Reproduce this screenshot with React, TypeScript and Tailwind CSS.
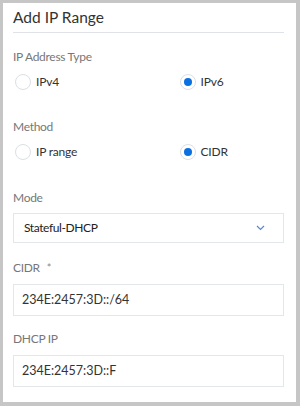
const font = { fontFamily: 'Lato, "Noto Sans", sans-serif' };

const Radio = ({ label, checked }: { label: string; checked?: boolean }) => (
  <div className="flex items-center h-[20px]">
    <span className="w-[16px] h-[16px] ml-[2px] rounded-full border border-[#dcdfe3] bg-white flex items-center justify-center">
      {checked && <span className="w-[8px] h-[8px] rounded-full bg-[#0a6fe0]" />}
    </span>
    <span className="text-[12px] tracking-[-0.2px] text-[#333] ml-[5px]">{label}</span>
  </div>
);

const Label = ({ children }: { children: React.ReactNode }) => (
  <div className="h-[18px] flex items-center text-[12px] tracking-[-0.3px] text-[#777]">
    {children}
  </div>
);

const RadioGroup = ({ a, b }: { a: string; b: string }) => (
  <div className="grid grid-cols-2 mt-[6px]">
    <Radio label={a} />
    <div className="pl-[29px]">
      <Radio label={b} checked />
    </div>
  </div>
);

export default function App() {
  return (
    <div
      className="w-[300px] h-[406px] bg-[#c6c6c6] pt-[3px] pl-[3px] pr-[4px] pb-[4px]"
      style={font}
    >
      <div className="h-full bg-white pl-[10px] pr-[12px]">
        <div className="h-[30px] flex items-center border-b border-[#dfe3e8] text-[15.5px] text-[#333]">
          Add IP Range
        </div>

        <div className="mt-[15px]">
          <Label>IP Address Type</Label>
          <RadioGroup a="IPv4" b="IPv6" />
        </div>

        <div className="mt-[26px]">
          <Label>Method</Label>
          <RadioGroup a="IP range" b="CIDR" />
        </div>

        <div className="mt-[27px]">
          <Label>Mode</Label>
          <div className="mt-[6px] h-[30px] border border-[#e3e6ea] flex items-center justify-between pl-[10px] pr-[18px] text-[12px] tracking-[-0.4px] text-[#222]">
            <span>Stateful-DHCP</span>
            <svg width="9" height="6" viewBox="0 0 9 6" fill="none">
              <path d="M1 1l3.5 3.5L8 1" stroke="#5b86d0" strokeWidth="1.2" />
            </svg>
          </div>
        </div>

        <div className="mt-[16px]">
          <Label>
            CIDR <span className="ml-[7px] text-[#8a8a8a] text-[11px]">*</span>
          </Label>
          <div className="mt-[7px] h-[32px] border border-[#e3e6ea] flex items-center pl-[8px] text-[12.5px] text-[#333]">
            234E:2457:3D::/64
          </div>
        </div>

        <div className="mt-[14px]">
          <Label>DHCP IP</Label>
          <div className="mt-[7px] h-[32px] border border-[#e3e6ea] flex items-center pl-[8px] text-[12.5px] text-[#333]">
            234E:2457:3D::F
          </div>
        </div>
      </div>
    </div>
  );
}
